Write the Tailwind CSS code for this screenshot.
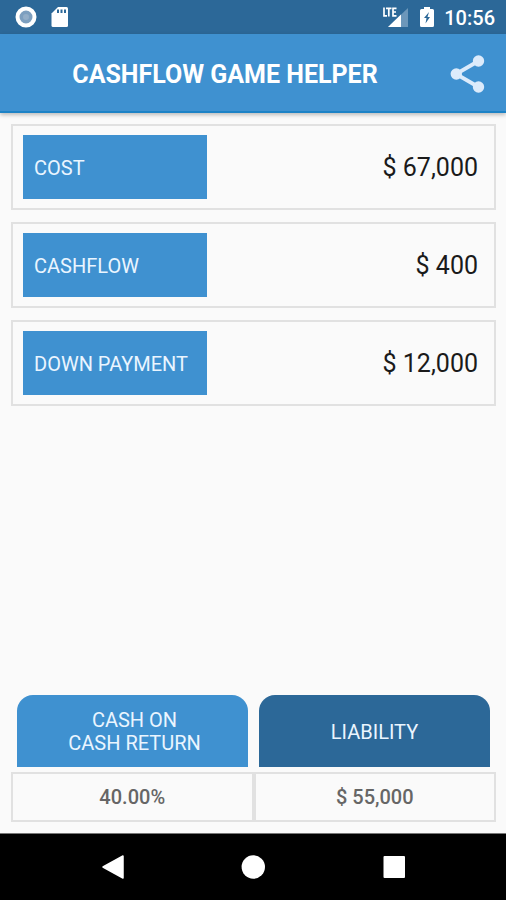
<!DOCTYPE html>
<html lang="en">
<head>
<meta charset="utf-8">
<meta name="viewport" content="width=device-width, initial-scale=1">
<title>Cashflow Game Helper</title>
<script src="https://cdn.jsdelivr.net/npm/@tailwindcss/browser@4"></script>
</head>
<body class="flex min-h-screen flex-col bg-[#fafafa] font-[Roboto,sans-serif]">
  <div class="flex h-[34px] items-center bg-[#2c6898] pr-[11px] pl-[15px] text-white">
    <svg class="size-[22px]" viewBox="0 0 22 22" aria-hidden="true">
      <circle cx="11" cy="11" r="8.500" fill="#7d9fbf" stroke="#fff" stroke-width="4"/>
      <circle cx="11" cy="11" r="3" fill="#93aec8"/>
    </svg>
    <svg class="ml-[14px] h-[22px] w-[18px]" viewBox="0 0 18 22" aria-hidden="true">
      <path fill="#fff" d="M7 1H15.500Q17 1 17 2.500V19.500Q17 21 15.500 21H2Q.5 21 .5 19.500V7.500Z"/>
      <path fill="#2c6898" d="M6 3.500h2v3.500H6zM9.500 3.500h2v3.500h-2zM13 3.500h2v3.500h-2z"/>
    </svg>
    <svg class="ml-auto h-[24px] w-[28px]" viewBox="0 0 28 24" aria-label="LTE signal">
      <path fill="#6d97ba" d="M27 3V22H7Z"/>
      <path fill="#fff" d="M20 9.600V22H7Z"/>
      <path fill="#2c6898" d="M0 0H16V12H0Z"/>
      <path fill="none" stroke="#fff" stroke-width="1.700" d="M3 2.500v8.300h3M5 3.300h5.500M7.800 3.300V11.600M15.500 3.300h-3.500v7.500h3.500M12 7h3"/>
    </svg>
    <svg class="ml-[11px] h-[22px] w-[14px]" viewBox="0 0 14 22" aria-hidden="true">
      <path fill="#fff" d="M4 1h6v2H12.500Q14 3 14 4.500V19.500Q14 21 12.500 21H1.500Q0 21 0 19.500V4.500Q0 3 1.500 3H4Z"/>
      <path fill="#2c6898" d="M9 6L4 12h2.500L5.500 17.500L10 11H7.500Z"/>
    </svg>
    <span class="ml-[10px] pt-[2px] text-[20px] leading-6 font-medium">10:56</span>
  </div>

  <header class="relative flex h-[79px] items-center border-b-2 border-[#1c82c6] bg-[#3f91d0] pt-[2px] pr-[16px] shadow-[0_2px_4px_rgba(0,0,0,0.25)]">
    <h1 class="flex-1 pt-[3px] text-center text-[25px] leading-8 font-bold text-white">CASHFLOW GAME HELPER</h1>
    <button type="button" aria-label="Share" class="size-[40px] text-[#dcebfb]">
      <svg class="size-[40px]" viewBox="0 0 40 40" aria-hidden="true">
        <path d="M28.500 7L6 20L28.500 33" fill="none" stroke="currentColor" stroke-width="3.800"/>
        <circle cx="28.500" cy="7" r="5.700" fill="currentColor"/>
        <circle cx="6.300" cy="20" r="5.700" fill="currentColor"/>
        <circle cx="28.500" cy="33" r="5.700" fill="currentColor"/>
      </svg>
    </button>
  </header>

  <main class="flex flex-1 flex-col pt-[11px] pr-[10px] pb-[11px] pl-[11px]">
    <form class="flex flex-col gap-3">
      <div class="flex h-[86px] items-center border-2 border-[#e1e1e1] px-[10px]">
        <label for="cost" class="flex h-16 w-2/5 items-center bg-[#3f91d0] px-[11px] pt-[2px] text-[20px] leading-6 text-[#eaf5ff]">COST</label>
        <input id="cost" type="text" inputmode="numeric" value="$ 67,000" class="min-w-0 flex-1 bg-transparent pt-[2px] pr-[6px] text-right text-[25px] leading-8 text-[#1a1a1a] outline-none">
      </div>
      <div class="flex h-[86px] items-center border-2 border-[#e1e1e1] px-[10px]">
        <label for="cashflow" class="flex h-16 w-2/5 items-center bg-[#3f91d0] px-[11px] pt-[2px] text-[20px] leading-6 text-[#eaf5ff]">CASHFLOW</label>
        <input id="cashflow" type="text" inputmode="numeric" value="$ 400" class="min-w-0 flex-1 bg-transparent pt-[2px] pr-[6px] text-right text-[25px] leading-8 text-[#1a1a1a] outline-none">
      </div>
      <div class="flex h-[86px] items-center border-2 border-[#e1e1e1] px-[10px]">
        <label for="down" class="flex h-16 w-2/5 items-center bg-[#3f91d0] px-[11px] pt-[2px] text-[20px] leading-6 whitespace-nowrap text-[#eaf5ff]">DOWN PAYMENT</label>
        <input id="down" type="text" inputmode="numeric" value="$ 12,000" class="min-w-0 flex-1 bg-transparent pt-[2px] pr-[6px] text-right text-[25px] leading-8 text-[#1a1a1a] outline-none">
      </div>
    </form>

    <section class="mt-auto">
      <div class="grid grid-cols-2 gap-[11px] px-[6px]">
        <button type="button" class="h-[72px] rounded-t-2xl bg-[#3f91d0] pt-[2px] pl-[4px] text-[20px] leading-[23px] text-[#eaf5ff]">CASH ON<br>CASH RETURN</button>
        <button type="button" class="h-[72px] rounded-t-2xl bg-[#2c6898] pt-[2px] text-[20px] leading-[23px] text-[#eaf5ff]">LIABILITY</button>
      </div>
      <div class="mt-[5px] grid grid-cols-2 text-center text-[20px] leading-[46px] font-medium text-[#666]">
        <output class="border-2 border-[#e1e1e1]">40.00%</output>
        <output class="border-2 border-[#e1e1e1]">$ 55,000</output>
      </div>
    </section>
  </main>

  <nav class="flex h-[67px] items-center justify-center gap-[116px] border-t border-[#777] bg-black text-white" aria-label="System navigation">
    <button type="button" aria-label="Back" class="size-6"><svg class="size-6" viewBox="0 0 24 24" aria-hidden="true"><path fill="currentColor" stroke="currentColor" stroke-linejoin="round" stroke-width="1.500" d="M2 12L22 1V23Z"/></svg></button>
    <button type="button" aria-label="Home" class="size-6"><svg class="size-6" viewBox="0 0 24 24" aria-hidden="true"><circle cx="12.300" cy="12" r="11.700" fill="currentColor"/></svg></button>
    <button type="button" aria-label="Recent apps" class="size-6"><svg class="size-6" viewBox="0 0 24 24" aria-hidden="true"><rect x="2.500" y="1" width="21.500" height="22" rx="1" fill="currentColor"/></svg></button>
  </nav>
</body>
</html>
